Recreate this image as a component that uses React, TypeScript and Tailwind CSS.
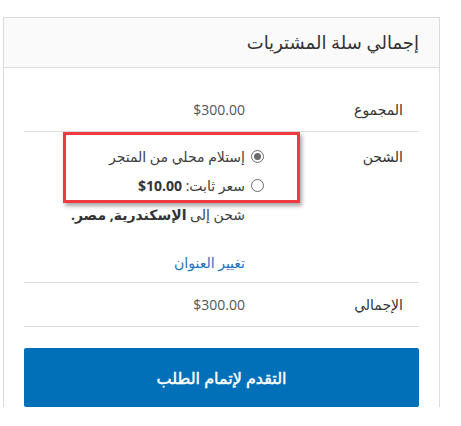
export default function App() {
  return (
    <div
      dir="rtl"
      className="relative min-h-[426px] bg-white pt-[17px] pl-[3px] pr-[21px] text-[14px] text-[#404040]"
      style={{ fontFamily: '"Open Sans", "DejaVu Sans", sans-serif' }}
    >
      <div className="border-x border-t border-[#dcdcdc]">
        {/* Header */}
        <div className="flex h-[50px] items-center border-b border-[#dcdcdc] bg-[#fafafa] px-5">
          <h2 className="text-[18px] text-[#333]">إجمالي سلة المشتريات</h2>
        </div>

        <div className="px-5 pt-5">
          {/* Subtotal */}
          <div className="grid grid-cols-[158px_1fr] border-b border-[#dcdcdc] py-[11px] leading-[21px]">
            <div className="pr-4 text-[#333]">المجموع</div>
            <div className="pr-4 text-[#555]">$300.00</div>
          </div>

          {/* Shipping */}
          <div className="grid grid-cols-[158px_1fr] border-b border-[#dcdcdc] pt-[10px] pb-[5px] leading-[29px]">
            <div className="pr-4 text-[#333]">الشحن</div>
            <div className="pr-4">
              <ul className="-mr-[19px]">
                <li className="flex items-center gap-[6px]">
                  <span className="flex h-[13px] w-[13px] items-center justify-center rounded-full border border-[#6b6b6b]">
                    <span className="h-[7px] w-[7px] rounded-full bg-[#6b6b6b]" />
                  </span>
                  <span>إستلام محلي من المتجر</span>
                </li>
                <li className="flex items-center gap-[6px]">
                  <span className="h-[13px] w-[13px] rounded-full border border-[#6b6b6b]" />
                  <span>
                    سعر ثابت: <b dir="ltr" className="inline-block text-[#333]">$10.00</b>
                  </span>
                </li>
              </ul>
              <p>
                شحن إلى <b className="text-[#333]">الإسكندرية, مصر.</b>
              </p>
              <a href="#" className="mt-[19px] block text-[#1e73be]">
                تغيير العنوان
              </a>
            </div>
          </div>

          {/* Total */}
          <div className="grid grid-cols-[158px_1fr] border-b border-[#dcdcdc] py-[11px] leading-[21px]">
            <div className="pr-4 text-[#333]">الإجمالي</div>
            <div className="pr-4 text-[#555]">$300.00</div>
          </div>

          <button className="mt-[21px] mb-[18px] flex h-[59px] w-full items-center justify-center rounded-[2px] bg-[#0170b8] text-[16px] font-normal text-white [-webkit-text-stroke:0.45px_white]">
            التقدم لإتمام الطلب
          </button>
        </div>
      </div>

      {/* annotation highlight */}
      <div className="pointer-events-none absolute left-[63px] top-[132px] h-[71px] w-[237px] border-[3px] border-[#ee3b3f] shadow-[2px_3px_4px_rgba(0,0,0,0.35)]" />
    </div>
  )
}
